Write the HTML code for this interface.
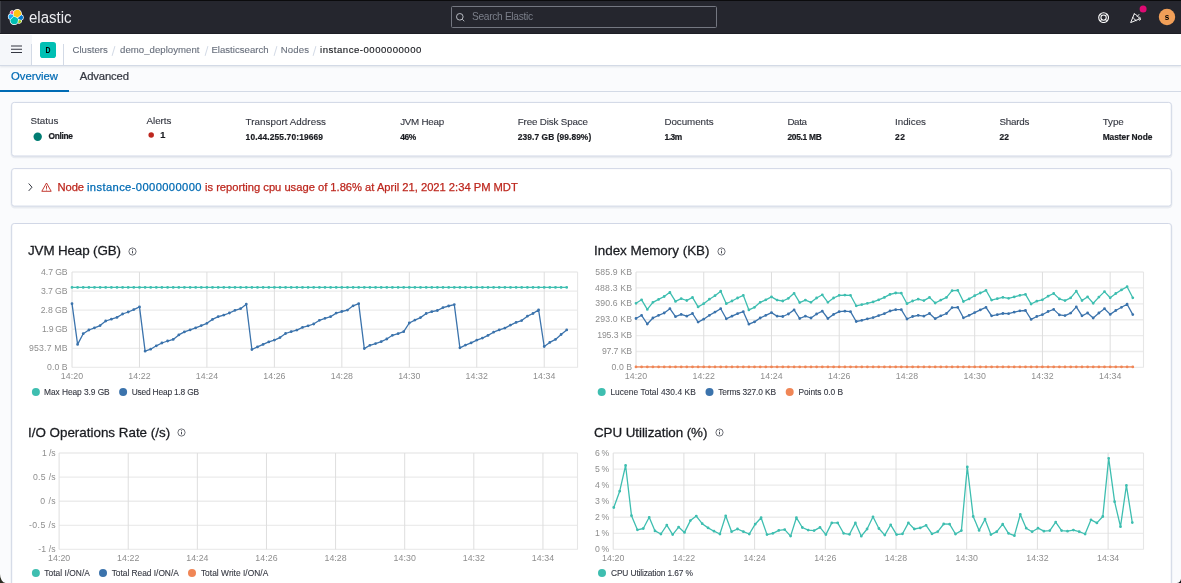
<!DOCTYPE html>
<html lang="en"><head><meta charset="utf-8"><title>Stack Monitoring - Node instance-0000000000</title>
<style>
html,body{margin:0;padding:0}
body{width:1181px;height:583px;overflow:hidden;background:#fafbfd;position:relative;font-family:"Liberation Sans",sans-serif}
#root{position:absolute;left:0;top:0;width:1181px;height:583px;will-change:transform}
.abs{position:absolute}
.t{position:absolute;white-space:nowrap;line-height:1}
.hdr{position:absolute;left:0;top:0;width:1181px;height:34px;background:#25262e}
.search{position:absolute;left:450.7px;top:5.6px;width:264.5px;height:20.4px;border:1px solid #747781;border-radius:1.5px;background:#25262e;box-sizing:content-box}
.bar2{position:absolute;left:0;top:34px;width:1181px;height:31px;background:#fff;border-bottom:1px solid #d3dae6;box-shadow:0 1px 2px rgba(152,162,179,.25)}
.menu{position:absolute;left:0;top:35px;width:32px;height:30px;background:#f5f7fa}
</style></head>
<body>
<div id="root">
<div class="hdr"></div>
<svg class="abs" style="left:7px;top:8px" width="17" height="17" viewBox="-1.6 -2.1 34 34"><g fill="#fff" stroke="#fff" stroke-width="2.7" stroke-linejoin="round"><path d="M12.58 13.787l7.002 3.211 7.066-6.213a7.849 7.849 0 00.152-1.557c0-4.287-3.49-7.775-7.776-7.775a7.761 7.761 0 00-6.413 3.388l-1.176 6.118 1.145 2.828z"/><path d="M5.333 21.215a7.913 7.913 0 00-.151 1.58c0 4.299 3.497 7.796 7.796 7.796a7.783 7.783 0 006.437-3.408l1.166-6.096-1.556-2.983-7.03-3.215-6.662 6.326z"/><path d="M5.29 9.075l4.799 1.136 1.052-5.472a3.787 3.787 0 00-2.27-.757 3.797 3.797 0 00-3.58 5.093z"/><path d="M4.872 10.22a5.354 5.354 0 00-3.53 5.026 5.33 5.33 0 003.447 4.989l6.735-6.103-1.237-2.651-5.415-1.26z"/><path d="M20.873 27.183a3.764 3.764 0 002.263.77 3.797 3.797 0 003.58-5.093l-4.797-1.136-1.046 5.459z"/><path d="M21.848 20.563l5.284 1.24a5.39 5.39 0 003.53-5.027 5.33 5.33 0 00-3.456-4.984l-6.91 6.069 1.552 2.702z"/></g><path fill="#FEC514" d="M12.58 13.787l7.002 3.211 7.066-6.213a7.849 7.849 0 00.152-1.557c0-4.287-3.49-7.775-7.776-7.775a7.761 7.761 0 00-6.413 3.388l-1.176 6.118 1.145 2.828z"/><path fill="#00BFB3" d="M5.333 21.215a7.913 7.913 0 00-.151 1.58c0 4.299 3.497 7.796 7.796 7.796a7.783 7.783 0 006.437-3.408l1.166-6.096-1.556-2.983-7.03-3.215-6.662 6.326z"/><path fill="#F04E98" d="M5.29 9.075l4.799 1.136 1.052-5.472a3.787 3.787 0 00-2.27-.757 3.797 3.797 0 00-3.58 5.093z"/><path fill="#1BA9F5" d="M4.872 10.22a5.354 5.354 0 00-3.53 5.026 5.33 5.33 0 003.447 4.989l6.735-6.103-1.237-2.651-5.415-1.26z"/><path fill="#93C90E" d="M20.873 27.183a3.764 3.764 0 002.263.77 3.797 3.797 0 003.58-5.093l-4.797-1.136-1.046 5.459z"/><path fill="#0077CC" d="M21.848 20.563l5.284 1.24a5.39 5.39 0 003.53-5.027 5.33 5.33 0 00-3.456-4.984l-6.91 6.069 1.552 2.702z"/></svg>
<span class="t" id="elastic" style="left:29.1px;top:9px;font-size:16.3px;color:#ececf0;transform:scaleX(0.9230);transform-origin:0 0;">elastic</span>
<div class="search"></div>
<svg class="abs" style="left:455px;top:12px" width="10" height="10" viewBox="0 0 10 10"><path fill="none" stroke="#bfc2c9" stroke-width=".95" d="M7.3 7.3 9.3 9.2"/><circle cx="4.8" cy="4.8" r="3.3" fill="none" stroke="#bfc2c9" stroke-width=".95"/></svg>
<span class="t" id="search" style="left:472px;top:12px;font-size:10.2px;color:#7b7f8a;letter-spacing:-0.317px;">Search Elastic</span>
<svg class="abs" style="left:1097.9px;top:11.7px" width="11.2" height="11.2" viewBox="0 0 16 16" fill="none" stroke="#fff" stroke-width="1.1">
<circle cx="8" cy="8" r="7" stroke-width="1.6"/><circle cx="8" cy="8" r="3.8" stroke-width="1.5"/><path d="M3 3 5.2 5.2M13 3 10.8 5.2M3 13 5.2 10.8M13 13 10.8 10.8" stroke-width="1.5" stroke-opacity=".75"/></svg>
<svg class="abs" style="left:1129.6px;top:11.5px" width="11.4" height="11.4" viewBox="0 0 16 16" fill="none" stroke="#fff" stroke-width="1.35" stroke-linejoin="round" stroke-linecap="round">
<path d="M6 2.6 0.9 14.9 13.2 9.8M6 2.6c3.2 1.1 6 3.9 7.2 7.2M3.8 7.8c2 1.1 3.5 2.7 4.5 4.6M10.2 6.200l2.3-2.6M13.4 7.3c1.100.3 1.9 1.1 1.6 2.5-.2.9-.700 1.5-1.3 1.9"/></svg>
<svg class="abs" style="left:1138px;top:4px" width="10" height="10"><circle cx="5.1" cy="5.00" r="3.5" fill="#dd0a73"/></svg>
<svg class="abs" style="left:1157px;top:7px" width="20" height="20"><circle cx="10.00" cy="10.00" r="8.2" fill="#f19f58"/></svg>
<span class="t" id="avs" style="left:1067px;width:200px;text-align:center;top:13px;font-size:8.8px;color:#000;font-weight:700;transform:scaleX(0.8968);transform-origin:50% 0;">s</span>
<div class="bar2"></div>
<div class="menu"></div>
<svg class="abs" style="left:11px;top:44px" width="11" height="10" viewBox="0 0 11 10"><path stroke="#343741" stroke-width="1.1" d="M0 2h11M0 5.3h11M0 8.55h11"/></svg>
<div class="abs" style="left:40px;top:42px;width:16px;height:16px;border-radius:2.8px;background:#00bfb3"></div>
<span class="t" id="D" style="left:-52.2px;width:200px;text-align:center;top:46px;font-size:8.4px;color:#000;font-weight:700;transform:scaleX(0.8247);transform-origin:50% 0;">D</span>
<div class="abs" style="left:31px;top:44px;width:1px;height:21px;background:#d3dae6"></div>
<div class="abs" style="left:63px;top:44px;width:1px;height:21px;background:#d3dae6"></div>
<span class="t" id="bc1" style="left:72.5px;top:45px;font-size:9.6px;color:#69707d;letter-spacing:0.016px;-webkit-text-stroke:0.12px;">Clusters</span>
<span class="t" id="bc2" style="left:120px;top:45px;font-size:9.6px;color:#69707d;letter-spacing:0.04px;-webkit-text-stroke:0.12px;">demo_deployment</span>
<span class="t" id="bc3" style="left:211.4px;top:45px;font-size:9.6px;color:#69707d;letter-spacing:0.011px;-webkit-text-stroke:0.12px;">Elasticsearch</span>
<span class="t" id="bc4" style="left:280.8px;top:45px;font-size:9.6px;color:#69707d;letter-spacing:0.116px;-webkit-text-stroke:0.12px;">Nodes</span>
<span class="t" id="bc5" style="left:320px;top:45px;font-size:9.6px;color:#1a1c21;letter-spacing:0.506px;-webkit-text-stroke:0.15px;">instance-0000000000</span>
<div class="abs" style="left:112.9px;top:45.8px;width:1px;height:10px;background:#d3dae6;transform:rotate(17deg)"></div>
<div class="abs" style="left:205.8px;top:45.8px;width:1px;height:10px;background:#d3dae6;transform:rotate(17deg)"></div>
<div class="abs" style="left:274.5px;top:45.8px;width:1px;height:10px;background:#d3dae6;transform:rotate(17deg)"></div>
<div class="abs" style="left:314.3px;top:45.8px;width:1px;height:10px;background:#d3dae6;transform:rotate(17deg)"></div>
<div class="abs" style="left:0;top:91px;width:1181px;height:1px;background:#d3dae6"></div>
<div class="abs" style="left:0;top:90px;width:69px;height:2px;background:#006bb4"></div>
<span class="t" id="tab1" style="left:11.1px;top:71px;font-size:11.3px;color:#006bb4;letter-spacing:-0.028px;-webkit-text-stroke:0.22px;">Overview</span>
<span class="t" id="tab2" style="left:79.8px;top:71px;font-size:11.3px;color:#343741;letter-spacing:-0.15px;-webkit-text-stroke:0.22px;">Advanced</span>
<svg class="abs" style="left:0;top:0" width="1181" height="583" viewBox="0 0 1181 583"><rect x="11.7" y="103.6" width="1159.6" height="53.6" rx="3" fill="none" stroke="#98a2b3" stroke-opacity=".16" stroke-width="2.2"/><rect x="11.7" y="102.4" width="1159.6" height="53.6" rx="2.5" fill="#fff" stroke="#d1d7e6" stroke-width="1"/><rect x="11.7" y="169.8" width="1159.6" height="37.5" rx="3" fill="none" stroke="#98a2b3" stroke-opacity=".16" stroke-width="2.2"/><rect x="11.7" y="168.6" width="1159.6" height="37.5" rx="2.5" fill="#fff" stroke="#d1d7e6" stroke-width="1"/><rect x="11.7" y="224.7" width="1159.6" height="396.5" rx="3" fill="none" stroke="#98a2b3" stroke-opacity=".16" stroke-width="2.2"/><rect x="11.7" y="223.5" width="1159.6" height="396.5" rx="2.5" fill="#fff" stroke="#d1d7e6" stroke-width="1"/></svg>
<span class="t" id="lab0" style="left:30.5px;top:116px;font-size:9.8px;color:#343741;letter-spacing:0.004px;-webkit-text-stroke:0.12px;">Status</span>
<span class="t" id="lab1" style="left:146.5px;top:116px;font-size:9.8px;color:#343741;letter-spacing:-0.029px;-webkit-text-stroke:0.12px;">Alerts</span>
<span class="t" id="lab2" style="left:245.6px;top:117px;font-size:9.8px;color:#343741;letter-spacing:0.044px;-webkit-text-stroke:0.12px;">Transport Address</span>
<span class="t" id="lab3" style="left:400.2px;top:117px;font-size:9.8px;color:#343741;letter-spacing:-0.264px;-webkit-text-stroke:0.12px;">JVM Heap</span>
<span class="t" id="lab4" style="left:517.8px;top:117px;font-size:9.8px;color:#343741;letter-spacing:-0.166px;-webkit-text-stroke:0.12px;">Free Disk Space</span>
<span class="t" id="lab5" style="left:664.4px;top:117px;font-size:9.8px;color:#343741;letter-spacing:-0.045px;-webkit-text-stroke:0.12px;">Documents</span>
<span class="t" id="lab6" style="left:787.4px;top:117px;font-size:9.8px;color:#343741;letter-spacing:-0.368px;-webkit-text-stroke:0.12px;">Data</span>
<span class="t" id="lab7" style="left:895px;top:117px;font-size:9.8px;color:#343741;letter-spacing:-0.008px;-webkit-text-stroke:0.12px;">Indices</span>
<span class="t" id="lab8" style="left:999.4px;top:117px;font-size:9.8px;color:#343741;letter-spacing:-0.209px;-webkit-text-stroke:0.12px;">Shards</span>
<span class="t" id="lab9" style="left:1102.7px;top:117px;font-size:9.8px;color:#343741;letter-spacing:-0.05px;-webkit-text-stroke:0.12px;">Type</span>
<span class="t" id="val0" style="left:48.5px;top:132px;font-size:8.4px;color:#1a1c21;font-weight:700;letter-spacing:-0.312px;-webkit-text-stroke:0.2px;">Online</span>
<span class="t" id="val1" style="left:160.2px;top:131px;font-size:9.2px;color:#1a1c21;font-weight:700;-webkit-text-stroke:0.2px;">1</span>
<span class="t" id="val2" style="left:245.6px;top:133px;font-size:8.4px;color:#1a1c21;font-weight:700;letter-spacing:0.142px;-webkit-text-stroke:0.2px;">10.44.255.70:19669</span>
<span class="t" id="val3" style="left:400.2px;top:133px;font-size:8.4px;color:#1a1c21;font-weight:700;letter-spacing:-0.383px;-webkit-text-stroke:0.2px;">46%</span>
<span class="t" id="val4" style="left:517.8px;top:133px;font-size:8.4px;color:#1a1c21;font-weight:700;letter-spacing:0.077px;-webkit-text-stroke:0.2px;">239.7 GB (99.89%)</span>
<span class="t" id="val5" style="left:664.4px;top:133px;font-size:8.4px;color:#1a1c21;font-weight:700;letter-spacing:-0.4px;-webkit-text-stroke:0.2px;">1.3m</span>
<span class="t" id="val6" style="left:787.4px;top:133px;font-size:8.4px;color:#1a1c21;font-weight:700;letter-spacing:-0.273px;-webkit-text-stroke:0.2px;">205.1 MB</span>
<span class="t" id="val7" style="left:895px;top:133px;font-size:8.4px;color:#1a1c21;font-weight:700;letter-spacing:0.672px;-webkit-text-stroke:0.2px;">22</span>
<span class="t" id="val8" style="left:999.4px;top:133px;font-size:8.4px;color:#1a1c21;font-weight:700;letter-spacing:0.272px;-webkit-text-stroke:0.2px;">22</span>
<span class="t" id="val9" style="left:1102.7px;top:133px;font-size:8.4px;color:#1a1c21;font-weight:700;letter-spacing:-0.057px;-webkit-text-stroke:0.2px;">Master Node</span>
<svg class="abs" style="left:32px;top:131px" width="12" height="12"><circle cx="5.7" cy="5.7" r="4.2" fill="#017d73"/></svg>
<svg class="abs" style="left:147px;top:131px" width="9" height="9"><circle cx="4.2" cy="4.1" r="2.75" fill="#bd271e"/></svg>
<svg class="abs" style="left:26px;top:182px" width="10" height="10" viewBox="0 0 10 10"><path fill="none" stroke="#343741" stroke-width="1" d="M2.7 1.5 6 5.2 2.7 8.9"/></svg>
<svg class="abs" style="left:41px;top:182px" width="11" height="10" viewBox="0 0 11 10"><path fill="none" stroke="#bd271e" stroke-width=".9" stroke-linejoin="round" d="M5.5 1 10.2 9.3H.8zM5.5 3.8v3M5.5 7.6v.8"/></svg>
<span class="t" id="al1" style="left:57.5px;top:182px;font-size:11.2px;color:#bd271e;letter-spacing:-0.083px;-webkit-text-stroke:0.25px;">Node</span>
<span class="t" id="al2" style="left:87px;top:182px;font-size:11.2px;color:#006bb4;letter-spacing:0.382px;-webkit-text-stroke:0.25px;">instance-0000000000</span>
<span class="t" id="al3" style="left:205px;top:182px;font-size:11.2px;color:#bd271e;letter-spacing:-0.011px;-webkit-text-stroke:0.25px;">is reporting cpu usage of 1.86% at April 21, 2021 2:34 PM MDT</span>
<span class="t" id="c1t" style="left:28px;top:244px;font-size:13.4px;color:#1a1c21;letter-spacing:-0.125px;-webkit-text-stroke:0.27px;">JVM Heap (GB)</span>
<svg class="abs" style="left:127.8px;top:246.8px" width="9" height="9" viewBox="0 0 9 9"><circle cx="4.5" cy="4.5" r="3.6" fill="none" stroke="#343741" stroke-width=".7"/><path stroke="#343741" stroke-width=".9" d="M4.5 3.9v2.5M4.5 2.3v.9"/></svg>
<svg class="abs" style="left:0;top:0" width="1181" height="583" viewBox="0 0 1181 583"><path d="M72 272.00H577.6M72 291.08H577.6M72 310.16H577.6M72 329.24H577.6M72 348.32H577.6M72 367.4H577.6" stroke="#ececec" stroke-width="1.35" fill="none"/><path d="M72.00 272V367.4M139.46 272V367.4M206.92 272V367.4M274.38 272V367.4M341.84 272V367.4M409.3 272V367.4M476.76 272V367.4M544.22 272V367.4" stroke="#dedede" stroke-width="1" fill="none"/><path d="M577.6 272V367.4" stroke="#e6e6e6" stroke-width="1.1" fill="none"/><path d="M72.0 287.4L77.6 287.4L83.2 287.4L88.9 287.4L94.5 287.4L100.1 287.4L105.7 287.4L111.4 287.4L117.0 287.4L122.6 287.4L128.2 287.4L133.8 287.4L139.5 287.4L145.1 287.4L150.7 287.4L156.3 287.4L161.9 287.4L167.6 287.4L173.2 287.4L178.8 287.4L184.4 287.4L190.1 287.4L195.7 287.4L201.3 287.4L206.9 287.4L212.5 287.4L218.2 287.4L223.8 287.4L229.4 287.4L235.0 287.4L240.6 287.4L246.3 287.4L251.9 287.4L257.5 287.4L263.1 287.4L268.8 287.4L274.4 287.4L280.0 287.4L285.6 287.4L291.2 287.4L296.9 287.4L302.5 287.4L308.1 287.4L313.7 287.4L319.4 287.4L325.0 287.4L330.6 287.4L336.2 287.4L341.8 287.4L347.5 287.4L353.1 287.4L358.7 287.4L364.3 287.4L369.9 287.4L375.6 287.4L381.2 287.4L386.8 287.4L392.4 287.4L398.1 287.4L403.7 287.4L409.3 287.4L414.9 287.4L420.5 287.4L426.2 287.4L431.8 287.4L437.4 287.4L443.0 287.4L448.7 287.4L454.3 287.4L459.9 287.4L465.5 287.4L471.1 287.4L476.8 287.4L482.4 287.4L488.0 287.4L493.6 287.4L499.2 287.4L504.9 287.4L510.5 287.4L516.1 287.4L521.7 287.4L527.4 287.4L533.0 287.4L538.6 287.4L544.2 287.4L549.8 287.4L555.5 287.4L561.1 287.4L566.7 287.4" stroke="#3ebeb0" stroke-width="1.3" fill="none" stroke-linejoin="round"/><path d="M72.0 287.4h0M77.6 287.4h0M83.2 287.4h0M88.9 287.4h0M94.5 287.4h0M100.1 287.4h0M105.7 287.4h0M111.4 287.4h0M117.0 287.4h0M122.6 287.4h0M128.2 287.4h0M133.8 287.4h0M139.5 287.4h0M145.1 287.4h0M150.7 287.4h0M156.3 287.4h0M161.9 287.4h0M167.6 287.4h0M173.2 287.4h0M178.8 287.4h0M184.4 287.4h0M190.1 287.4h0M195.7 287.4h0M201.3 287.4h0M206.9 287.4h0M212.5 287.4h0M218.2 287.4h0M223.8 287.4h0M229.4 287.4h0M235.0 287.4h0M240.6 287.4h0M246.3 287.4h0M251.9 287.4h0M257.5 287.4h0M263.1 287.4h0M268.8 287.4h0M274.4 287.4h0M280.0 287.4h0M285.6 287.4h0M291.2 287.4h0M296.9 287.4h0M302.5 287.4h0M308.1 287.4h0M313.7 287.4h0M319.4 287.4h0M325.0 287.4h0M330.6 287.4h0M336.2 287.4h0M341.8 287.4h0M347.5 287.4h0M353.1 287.4h0M358.7 287.4h0M364.3 287.4h0M369.9 287.4h0M375.6 287.4h0M381.2 287.4h0M386.8 287.4h0M392.4 287.4h0M398.1 287.4h0M403.7 287.4h0M409.3 287.4h0M414.9 287.4h0M420.5 287.4h0M426.2 287.4h0M431.8 287.4h0M437.4 287.4h0M443.0 287.4h0M448.7 287.4h0M454.3 287.4h0M459.9 287.4h0M465.5 287.4h0M471.1 287.4h0M476.8 287.4h0M482.4 287.4h0M488.0 287.4h0M493.6 287.4h0M499.2 287.4h0M504.9 287.4h0M510.5 287.4h0M516.1 287.4h0M521.7 287.4h0M527.4 287.4h0M533.0 287.4h0M538.6 287.4h0M544.2 287.4h0M549.8 287.4h0M555.5 287.4h0M561.1 287.4h0M566.7 287.4h0" stroke="#3ebeb0" stroke-width="2.8" stroke-linecap="round" fill="none"/><path d="M72.0 303.7L77.6 344.4L83.2 333.7L88.9 330.0L94.5 327.8L100.1 325.6L105.7 321.0L111.4 319.2L117.0 317.4L122.6 314.0L128.2 312.0L133.8 309.6L139.5 306.9L145.1 351.2L150.7 349.2L156.3 345.8L161.9 343.0L167.6 341.0L173.2 339.4L178.8 334.9L184.4 331.9L190.1 329.9L195.7 327.8L201.3 325.6L206.9 323.3L212.5 319.4L218.2 316.7L223.8 315.1L229.4 313.0L235.0 310.3L240.6 308.7L246.3 304.2L251.9 349.5L257.5 346.9L263.1 344.4L268.8 341.9L274.4 340.1L280.0 337.6L285.6 333.5L291.2 331.7L296.9 330.1L302.5 327.4L308.1 325.8L313.7 324.0L319.4 320.3L325.0 318.3L330.6 316.7L336.2 313.1L341.8 311.5L347.5 310.1L353.1 305.8L358.7 303.7L364.3 348.6L369.9 345.3L375.6 343.6L381.2 341.7L386.8 339.0L392.4 335.3L398.1 333.7L403.7 331.7L409.3 323.0L414.9 320.1L420.5 317.6L426.2 313.5L431.8 311.7L437.4 310.5L443.0 307.6L448.7 306.0L454.3 304.6L459.9 347.8L465.5 345.1L471.1 342.9L476.8 340.1L482.4 338.1L488.0 335.4L493.6 332.2L499.2 329.9L504.9 328.1L510.5 325.1L516.1 322.4L521.7 320.6L527.4 316.2L533.0 313.5L538.6 309.9L544.2 346.5L549.8 342.4L555.5 339.4L561.1 334.5L566.7 329.9" stroke="#3b73ac" stroke-width="1.3" fill="none" stroke-linejoin="round"/><path d="M72.0 303.7h0M77.6 344.4h0M83.2 333.7h0M88.9 330.0h0M94.5 327.8h0M100.1 325.6h0M105.7 321.0h0M111.4 319.2h0M117.0 317.4h0M122.6 314.0h0M128.2 312.0h0M133.8 309.6h0M139.5 306.9h0M145.1 351.2h0M150.7 349.2h0M156.3 345.8h0M161.9 343.0h0M167.6 341.0h0M173.2 339.4h0M178.8 334.9h0M184.4 331.9h0M190.1 329.9h0M195.7 327.8h0M201.3 325.6h0M206.9 323.3h0M212.5 319.4h0M218.2 316.7h0M223.8 315.1h0M229.4 313.0h0M235.0 310.3h0M240.6 308.7h0M246.3 304.2h0M251.9 349.5h0M257.5 346.9h0M263.1 344.4h0M268.8 341.9h0M274.4 340.1h0M280.0 337.6h0M285.6 333.5h0M291.2 331.7h0M296.9 330.1h0M302.5 327.4h0M308.1 325.8h0M313.7 324.0h0M319.4 320.3h0M325.0 318.3h0M330.6 316.7h0M336.2 313.1h0M341.8 311.5h0M347.5 310.1h0M353.1 305.8h0M358.7 303.7h0M364.3 348.6h0M369.9 345.3h0M375.6 343.6h0M381.2 341.7h0M386.8 339.0h0M392.4 335.3h0M398.1 333.7h0M403.7 331.7h0M409.3 323.0h0M414.9 320.1h0M420.5 317.6h0M426.2 313.5h0M431.8 311.7h0M437.4 310.5h0M443.0 307.6h0M448.7 306.0h0M454.3 304.6h0M459.9 347.8h0M465.5 345.1h0M471.1 342.9h0M476.8 340.1h0M482.4 338.1h0M488.0 335.4h0M493.6 332.2h0M499.2 329.9h0M504.9 328.1h0M510.5 325.1h0M516.1 322.4h0M521.7 320.6h0M527.4 316.2h0M533.0 313.5h0M538.6 309.9h0M544.2 346.5h0M549.8 342.4h0M555.5 339.4h0M561.1 334.5h0M566.7 329.9h0" stroke="#3b73ac" stroke-width="2.8" stroke-linecap="round" fill="none"/></svg>
<span class="t" id="c1y0" style="right:1113.51px;top:268px;font-size:8.7px;color:#8e8e8e;letter-spacing:-0.109px;">4.7 GB</span>
<span class="t" id="c1y1" style="right:1113.47px;top:287px;font-size:8.7px;color:#8e8e8e;letter-spacing:-0.069px;">3.7 GB</span>
<span class="t" id="c1y2" style="right:1113.43px;top:306px;font-size:8.7px;color:#8e8e8e;letter-spacing:-0.029px;">2.8 GB</span>
<span class="t" id="c1y3" style="right:1113.71px;top:325px;font-size:8.7px;color:#8e8e8e;letter-spacing:-0.309px;">1.9 GB</span>
<span class="t" id="c1y4" style="right:1113.2px;top:344px;font-size:8.7px;color:#8e8e8e;letter-spacing:0.202px;">953.7 MB</span>
<span class="t" id="c1y5" style="right:1113.32px;top:363px;font-size:8.7px;color:#8e8e8e;letter-spacing:0.076px;">0.0 B</span>
<span class="t" id="c1x0" style="left:-27.96px;width:200px;text-align:center;top:372px;font-size:8.8px;color:#8e8e8e;letter-spacing:0.071px;">14:20</span>
<span class="t" id="c1x1" style="left:39.5px;width:200px;text-align:center;top:372px;font-size:8.8px;color:#8e8e8e;letter-spacing:0.071px;">14:22</span>
<span class="t" id="c1x2" style="left:106.96px;width:200px;text-align:center;top:372px;font-size:8.8px;color:#8e8e8e;letter-spacing:0.071px;">14:24</span>
<span class="t" id="c1x3" style="left:174.42px;width:200px;text-align:center;top:372px;font-size:8.8px;color:#8e8e8e;letter-spacing:0.071px;">14:26</span>
<span class="t" id="c1x4" style="left:241.88px;width:200px;text-align:center;top:372px;font-size:8.8px;color:#8e8e8e;letter-spacing:0.071px;">14:28</span>
<span class="t" id="c1x5" style="left:309.34px;width:200px;text-align:center;top:372px;font-size:8.8px;color:#8e8e8e;letter-spacing:0.071px;">14:30</span>
<span class="t" id="c1x6" style="left:376.8px;width:200px;text-align:center;top:372px;font-size:8.8px;color:#8e8e8e;letter-spacing:0.071px;">14:32</span>
<span class="t" id="c1x7" style="left:444.26px;width:200px;text-align:center;top:372px;font-size:8.8px;color:#8e8e8e;letter-spacing:0.071px;">14:34</span>
<svg class="abs" style="left:30px;top:386px" width="11" height="11"><circle cx="5.9" cy="5.9" r="4" fill="#3ebeb0"/></svg>
<span class="t" id="c1l0" style="left:44px;top:388px;font-size:8.4px;color:#343741;letter-spacing:-0.063px;-webkit-text-stroke:0.1px;">Max Heap 3.9 GB</span>
<svg class="abs" style="left:118px;top:386px" width="11" height="11"><circle cx="5.1" cy="5.9" r="4" fill="#3b73ac"/></svg>
<span class="t" id="c1l1" style="left:131.7px;top:388px;font-size:8.4px;color:#343741;letter-spacing:-0.193px;-webkit-text-stroke:0.1px;">Used Heap 1.8 GB</span>
<span class="t" id="c2t" style="left:594px;top:244px;font-size:13.4px;color:#1a1c21;letter-spacing:0.01px;-webkit-text-stroke:0.27px;">Index Memory (KB)</span>
<svg class="abs" style="left:717px;top:246.8px" width="9" height="9" viewBox="0 0 9 9"><circle cx="4.5" cy="4.5" r="3.6" fill="none" stroke="#343741" stroke-width=".7"/><path stroke="#343741" stroke-width=".9" d="M4.5 3.9v2.5M4.5 2.3v.9"/></svg>
<svg class="abs" style="left:0;top:0" width="1181" height="583" viewBox="0 0 1181 583"><path d="M636 272.00H1143.5M636 287.9H1143.5M636 303.8H1143.5M636 319.7H1143.5M636 335.6H1143.5M636 351.5H1143.5M636 367.4H1143.5" stroke="#ececec" stroke-width="1.35" fill="none"/><path d="M636.00 272V367.4M703.74 272V367.4M771.48 272V367.4M839.22 272V367.4M906.96 272V367.4M974.7 272V367.4M1042.44 272V367.4M1110.18 272V367.4" stroke="#dedede" stroke-width="1" fill="none"/><path d="M1143.5 272V367.4" stroke="#e6e6e6" stroke-width="1.1" fill="none"/><path d="M636.0 303.3L641.6 299.8L647.3 309.4L652.9 302.3L658.6 299.4L664.2 296.5L669.9 292.3L675.5 301.4L681.2 298.7L686.8 300.5L692.5 297.4L698.1 306.9L703.7 303.7L709.4 299.2L715.0 295.7L720.7 291.2L726.3 303.7L732.0 301.0L737.6 298.0L743.3 295.3L748.9 309.9L754.5 307.3L760.2 302.3L765.8 299.8L771.5 296.9L777.1 300.1L782.8 301.0L788.4 298.3L794.1 293.3L799.7 302.6L805.4 300.1L811.0 302.3L816.6 298.0L822.3 294.8L827.9 302.3L833.6 298.0L839.2 295.3L844.9 295.1L850.5 295.3L856.2 305.8L861.8 304.6L867.4 303.3L873.1 301.9L878.7 299.8L884.4 297.4L890.0 294.4L895.7 293.0L901.3 293.2L907.0 303.7L912.6 301.0L918.2 299.2L923.9 300.6L929.5 297.4L935.2 303.0L940.8 300.1L946.5 297.4L952.1 290.7L957.8 290.3L963.4 301.5L969.1 298.9L974.7 295.7L980.3 293.0L986.0 290.3L991.6 300.1L997.3 298.7L1002.9 297.3L1008.6 298.3L1014.2 296.9L1019.9 295.3L1025.5 294.4L1031.1 304.0L1036.8 301.2L1042.4 299.8L1048.1 296.2L1053.7 293.5L1059.4 298.9L1065.0 300.6L1070.7 297.8L1076.3 291.2L1082.0 300.5L1087.6 296.9L1093.2 303.3L1098.9 297.1L1104.5 291.6L1110.2 297.8L1115.8 293.5L1121.5 289.9L1127.1 286.7L1132.8 297.8" stroke="#3ebeb0" stroke-width="1.3" fill="none" stroke-linejoin="round"/><path d="M636.0 303.3h0M641.6 299.8h0M647.3 309.4h0M652.9 302.3h0M658.6 299.4h0M664.2 296.5h0M669.9 292.3h0M675.5 301.4h0M681.2 298.7h0M686.8 300.5h0M692.5 297.4h0M698.1 306.9h0M703.7 303.7h0M709.4 299.2h0M715.0 295.7h0M720.7 291.2h0M726.3 303.7h0M732.0 301.0h0M737.6 298.0h0M743.3 295.3h0M748.9 309.9h0M754.5 307.3h0M760.2 302.3h0M765.8 299.8h0M771.5 296.9h0M777.1 300.1h0M782.8 301.0h0M788.4 298.3h0M794.1 293.3h0M799.7 302.6h0M805.4 300.1h0M811.0 302.3h0M816.6 298.0h0M822.3 294.8h0M827.9 302.3h0M833.6 298.0h0M839.2 295.3h0M844.9 295.1h0M850.5 295.3h0M856.2 305.8h0M861.8 304.6h0M867.4 303.3h0M873.1 301.9h0M878.7 299.8h0M884.4 297.4h0M890.0 294.4h0M895.7 293.0h0M901.3 293.2h0M907.0 303.7h0M912.6 301.0h0M918.2 299.2h0M923.9 300.6h0M929.5 297.4h0M935.2 303.0h0M940.8 300.1h0M946.5 297.4h0M952.1 290.7h0M957.8 290.3h0M963.4 301.5h0M969.1 298.9h0M974.7 295.7h0M980.3 293.0h0M986.0 290.3h0M991.6 300.1h0M997.3 298.7h0M1002.9 297.3h0M1008.6 298.3h0M1014.2 296.9h0M1019.9 295.3h0M1025.5 294.4h0M1031.1 304.0h0M1036.8 301.2h0M1042.4 299.8h0M1048.1 296.2h0M1053.7 293.5h0M1059.4 298.9h0M1065.0 300.6h0M1070.7 297.8h0M1076.3 291.2h0M1082.0 300.5h0M1087.6 296.9h0M1093.2 303.3h0M1098.9 297.1h0M1104.5 291.6h0M1110.2 297.8h0M1115.8 293.5h0M1121.5 289.9h0M1127.1 286.7h0M1132.8 297.8h0" stroke="#3ebeb0" stroke-width="2.8" stroke-linecap="round" fill="none"/><path d="M636.0 318.5L641.6 315.3L647.3 324.0L652.9 318.0L658.6 315.3L664.2 313.0L669.9 308.7L675.5 316.7L681.2 314.4L686.8 316.2L692.5 313.5L698.1 322.1L703.7 319.2L709.4 315.3L715.0 312.1L720.7 308.7L726.3 318.8L732.0 316.2L737.6 313.7L743.3 311.7L748.9 324.2L754.5 321.9L760.2 318.0L765.8 315.3L771.5 312.6L777.1 316.2L782.8 316.5L788.4 314.0L794.1 309.9L799.7 318.5L805.4 316.2L811.0 318.0L816.6 314.0L822.3 311.2L827.9 318.5L833.6 314.4L839.2 311.7L844.9 311.2L850.5 311.7L856.2 321.5L861.8 320.3L867.4 318.8L873.1 317.6L878.7 315.6L884.4 313.7L890.0 311.0L895.7 309.7L901.3 309.7L907.0 319.0L912.6 316.5L918.2 315.3L923.9 316.2L929.5 313.5L935.2 318.7L940.8 315.8L946.5 313.5L952.1 307.6L957.8 307.3L963.4 317.8L969.1 315.3L974.7 312.6L980.3 309.9L986.0 307.3L991.6 315.8L997.3 314.7L1002.9 313.5L1008.6 313.7L1014.2 312.2L1019.9 310.8L1025.5 310.5L1031.1 319.4L1036.8 316.5L1042.4 314.7L1048.1 311.5L1053.7 309.4L1059.4 314.9L1065.0 315.6L1070.7 313.1L1076.3 306.9L1082.0 315.8L1087.6 313.0L1093.2 318.0L1098.9 313.0L1104.5 308.7L1110.2 314.4L1115.8 310.5L1121.5 307.3L1127.1 304.2L1132.8 314.6" stroke="#3b73ac" stroke-width="1.3" fill="none" stroke-linejoin="round"/><path d="M636.0 318.5h0M641.6 315.3h0M647.3 324.0h0M652.9 318.0h0M658.6 315.3h0M664.2 313.0h0M669.9 308.7h0M675.5 316.7h0M681.2 314.4h0M686.8 316.2h0M692.5 313.5h0M698.1 322.1h0M703.7 319.2h0M709.4 315.3h0M715.0 312.1h0M720.7 308.7h0M726.3 318.8h0M732.0 316.2h0M737.6 313.7h0M743.3 311.7h0M748.9 324.2h0M754.5 321.9h0M760.2 318.0h0M765.8 315.3h0M771.5 312.6h0M777.1 316.2h0M782.8 316.5h0M788.4 314.0h0M794.1 309.9h0M799.7 318.5h0M805.4 316.2h0M811.0 318.0h0M816.6 314.0h0M822.3 311.2h0M827.9 318.5h0M833.6 314.4h0M839.2 311.7h0M844.9 311.2h0M850.5 311.7h0M856.2 321.5h0M861.8 320.3h0M867.4 318.8h0M873.1 317.6h0M878.7 315.6h0M884.4 313.7h0M890.0 311.0h0M895.7 309.7h0M901.3 309.7h0M907.0 319.0h0M912.6 316.5h0M918.2 315.3h0M923.9 316.2h0M929.5 313.5h0M935.2 318.7h0M940.8 315.8h0M946.5 313.5h0M952.1 307.6h0M957.8 307.3h0M963.4 317.8h0M969.1 315.3h0M974.7 312.6h0M980.3 309.9h0M986.0 307.3h0M991.6 315.8h0M997.3 314.7h0M1002.9 313.5h0M1008.6 313.7h0M1014.2 312.2h0M1019.9 310.8h0M1025.5 310.5h0M1031.1 319.4h0M1036.8 316.5h0M1042.4 314.7h0M1048.1 311.5h0M1053.7 309.4h0M1059.4 314.9h0M1065.0 315.6h0M1070.7 313.1h0M1076.3 306.9h0M1082.0 315.8h0M1087.6 313.0h0M1093.2 318.0h0M1098.9 313.0h0M1104.5 308.7h0M1110.2 314.4h0M1115.8 310.5h0M1121.5 307.3h0M1127.1 304.2h0M1132.8 314.6h0" stroke="#3b73ac" stroke-width="2.8" stroke-linecap="round" fill="none"/><path d="M636.0 366.9L641.6 366.9L647.3 366.9L652.9 366.9L658.6 366.9L664.2 366.9L669.9 366.9L675.5 366.9L681.2 366.9L686.8 366.9L692.5 366.9L698.1 366.9L703.7 366.9L709.4 366.9L715.0 366.9L720.7 366.9L726.3 366.9L732.0 366.9L737.6 366.9L743.3 366.9L748.9 366.9L754.5 366.9L760.2 366.9L765.8 366.9L771.5 366.9L777.1 366.9L782.8 366.9L788.4 366.9L794.1 366.9L799.7 366.9L805.4 366.9L811.0 366.9L816.6 366.9L822.3 366.9L827.9 366.9L833.6 366.9L839.2 366.9L844.9 366.9L850.5 366.9L856.2 366.9L861.8 366.9L867.4 366.9L873.1 366.9L878.7 366.9L884.4 366.9L890.0 366.9L895.7 366.9L901.3 366.9L907.0 366.9L912.6 366.9L918.2 366.9L923.9 366.9L929.5 366.9L935.2 366.9L940.8 366.9L946.5 366.9L952.1 366.9L957.8 366.9L963.4 366.9L969.1 366.9L974.7 366.9L980.3 366.9L986.0 366.9L991.6 366.9L997.3 366.9L1002.9 366.9L1008.6 366.9L1014.2 366.9L1019.9 366.9L1025.5 366.9L1031.1 366.9L1036.8 366.9L1042.4 366.9L1048.1 366.9L1053.7 366.9L1059.4 366.9L1065.0 366.9L1070.7 366.9L1076.3 366.9L1082.0 366.9L1087.6 366.9L1093.2 366.9L1098.9 366.9L1104.5 366.9L1110.2 366.9L1115.8 366.9L1121.5 366.9L1127.1 366.9L1132.8 366.9" stroke="#f08656" stroke-width="1.3" fill="none" stroke-linejoin="round"/><path d="M636.0 366.9h0M641.6 366.9h0M647.3 366.9h0M652.9 366.9h0M658.6 366.9h0M664.2 366.9h0M669.9 366.9h0M675.5 366.9h0M681.2 366.9h0M686.8 366.9h0M692.5 366.9h0M698.1 366.9h0M703.7 366.9h0M709.4 366.9h0M715.0 366.9h0M720.7 366.9h0M726.3 366.9h0M732.0 366.9h0M737.6 366.9h0M743.3 366.9h0M748.9 366.9h0M754.5 366.9h0M760.2 366.9h0M765.8 366.9h0M771.5 366.9h0M777.1 366.9h0M782.8 366.9h0M788.4 366.9h0M794.1 366.9h0M799.7 366.9h0M805.4 366.9h0M811.0 366.9h0M816.6 366.9h0M822.3 366.9h0M827.9 366.9h0M833.6 366.9h0M839.2 366.9h0M844.9 366.9h0M850.5 366.9h0M856.2 366.9h0M861.8 366.9h0M867.4 366.9h0M873.1 366.9h0M878.7 366.9h0M884.4 366.9h0M890.0 366.9h0M895.7 366.9h0M901.3 366.9h0M907.0 366.9h0M912.6 366.9h0M918.2 366.9h0M923.9 366.9h0M929.5 366.9h0M935.2 366.9h0M940.8 366.9h0M946.5 366.9h0M952.1 366.9h0M957.8 366.9h0M963.4 366.9h0M969.1 366.9h0M974.7 366.9h0M980.3 366.9h0M986.0 366.9h0M991.6 366.9h0M997.3 366.9h0M1002.9 366.9h0M1008.6 366.9h0M1014.2 366.9h0M1019.9 366.9h0M1025.5 366.9h0M1031.1 366.9h0M1036.8 366.9h0M1042.4 366.9h0M1048.1 366.9h0M1053.7 366.9h0M1059.4 366.9h0M1065.0 366.9h0M1070.7 366.9h0M1076.3 366.9h0M1082.0 366.9h0M1087.6 366.9h0M1093.2 366.9h0M1098.9 366.9h0M1104.5 366.9h0M1110.2 366.9h0M1115.8 366.9h0M1121.5 366.9h0M1127.1 366.9h0M1132.8 366.9h0" stroke="#f08656" stroke-width="2.8" stroke-linecap="round" fill="none"/></svg>
<span class="t" id="c2y0" style="right:548.75px;top:268px;font-size:8.7px;color:#8e8e8e;letter-spacing:0.15px;">585.9 KB</span>
<span class="t" id="c2y1" style="right:548.72px;top:284px;font-size:8.7px;color:#8e8e8e;letter-spacing:0.179px;">488.3 KB</span>
<span class="t" id="c2y2" style="right:548.74px;top:299px;font-size:8.7px;color:#8e8e8e;letter-spacing:0.164px;">390.6 KB</span>
<span class="t" id="c2y3" style="right:548.75px;top:315px;font-size:8.7px;color:#8e8e8e;letter-spacing:0.15px;">293.0 KB</span>
<span class="t" id="c2y4" style="right:549.02px;top:331px;font-size:8.7px;color:#8e8e8e;letter-spacing:-0.121px;">195.3 KB</span>
<span class="t" id="c2y5" style="right:549.02px;top:347px;font-size:8.7px;color:#8e8e8e;letter-spacing:-0.12px;">97.7 KB</span>
<span class="t" id="c2y6" style="right:548.85px;top:363px;font-size:8.7px;color:#8e8e8e;letter-spacing:0.051px;">0.0 B</span>
<span class="t" id="c2x0" style="left:536.04px;width:200px;text-align:center;top:372px;font-size:8.8px;color:#8e8e8e;letter-spacing:0.071px;">14:20</span>
<span class="t" id="c2x1" style="left:603.78px;width:200px;text-align:center;top:372px;font-size:8.8px;color:#8e8e8e;letter-spacing:0.071px;">14:22</span>
<span class="t" id="c2x2" style="left:671.52px;width:200px;text-align:center;top:372px;font-size:8.8px;color:#8e8e8e;letter-spacing:0.071px;">14:24</span>
<span class="t" id="c2x3" style="left:739.26px;width:200px;text-align:center;top:372px;font-size:8.8px;color:#8e8e8e;letter-spacing:0.071px;">14:26</span>
<span class="t" id="c2x4" style="left:807px;width:200px;text-align:center;top:372px;font-size:8.8px;color:#8e8e8e;letter-spacing:0.071px;">14:28</span>
<span class="t" id="c2x5" style="left:874.74px;width:200px;text-align:center;top:372px;font-size:8.8px;color:#8e8e8e;letter-spacing:0.071px;">14:30</span>
<span class="t" id="c2x6" style="left:942.48px;width:200px;text-align:center;top:372px;font-size:8.8px;color:#8e8e8e;letter-spacing:0.071px;">14:32</span>
<span class="t" id="c2x7" style="left:1010.22px;width:200px;text-align:center;top:372px;font-size:8.8px;color:#8e8e8e;letter-spacing:0.071px;">14:34</span>
<svg class="abs" style="left:596px;top:386px" width="11" height="11"><circle cx="5.7" cy="5.9" r="4" fill="#3ebeb0"/></svg>
<span class="t" id="c2l0" style="left:610.4px;top:388px;font-size:8.4px;color:#343741;letter-spacing:0.064px;-webkit-text-stroke:0.1px;">Lucene Total 430.4 KB</span>
<svg class="abs" style="left:704px;top:386px" width="11" height="11"><circle cx="5.5" cy="5.9" r="4" fill="#3b73ac"/></svg>
<span class="t" id="c2l1" style="left:718.3px;top:388px;font-size:8.4px;color:#343741;letter-spacing:-0.146px;-webkit-text-stroke:0.1px;">Terms 327.0 KB</span>
<svg class="abs" style="left:784px;top:386px" width="11" height="11"><circle cx="5.7" cy="5.9" r="4" fill="#f08656"/></svg>
<span class="t" id="c2l2" style="left:798.5px;top:388px;font-size:8.4px;color:#343741;letter-spacing:-0.061px;-webkit-text-stroke:0.1px;">Points 0.0 B</span>
<span class="t" id="c3t" style="left:28px;top:426px;font-size:13.4px;color:#1a1c21;letter-spacing:-0.002px;-webkit-text-stroke:0.27px;">I/O Operations Rate (/s)</span>
<svg class="abs" style="left:176.8px;top:427.8px" width="9" height="9" viewBox="0 0 9 9"><circle cx="4.5" cy="4.5" r="3.6" fill="none" stroke="#343741" stroke-width=".7"/><path stroke="#343741" stroke-width=".9" d="M4.5 3.9v2.5M4.5 2.3v.9"/></svg>
<svg class="abs" style="left:0;top:0" width="1181" height="583" viewBox="0 0 1181 583"><path d="M59.1 453.00H577.5M59.1 477.1H577.5M59.1 501.2H577.5M59.1 525.3H577.5M59.1 549.4H577.5" stroke="#ececec" stroke-width="1.35" fill="none"/><path d="M59.1 453V549.4M128.22 453V549.4M197.34 453V549.4M266.46 453V549.4M335.58 453V549.4M404.7 453V549.4M473.82 453V549.4M542.94 453V549.4" stroke="#dedede" stroke-width="1" fill="none"/><path d="M577.5 453V549.4" stroke="#e6e6e6" stroke-width="1.1" fill="none"/></svg>
<span class="t" id="c3y0" style="right:1125.44px;top:449px;font-size:8.7px;color:#8e8e8e;letter-spacing:-0.139px;">1 /s</span>
<span class="t" id="c3y1" style="right:1124.99px;top:473px;font-size:8.7px;color:#8e8e8e;letter-spacing:0.31px;">0.5 /s</span>
<span class="t" id="c3y2" style="right:1124.81px;top:497px;font-size:8.7px;color:#8e8e8e;letter-spacing:0.495px;">0 /s</span>
<span class="t" id="c3y3" style="right:1124.88px;top:521px;font-size:8.7px;color:#8e8e8e;letter-spacing:0.424px;">-0.5 /s</span>
<span class="t" id="c3y4" style="right:1125.18px;top:545px;font-size:8.7px;color:#8e8e8e;letter-spacing:0.123px;">-1 /s</span>
<span class="t" id="c3x0" style="left:-40.86px;width:200px;text-align:center;top:554px;font-size:8.8px;color:#8e8e8e;letter-spacing:0.071px;">14:20</span>
<span class="t" id="c3x1" style="left:28.26px;width:200px;text-align:center;top:554px;font-size:8.8px;color:#8e8e8e;letter-spacing:0.071px;">14:22</span>
<span class="t" id="c3x2" style="left:97.38px;width:200px;text-align:center;top:554px;font-size:8.8px;color:#8e8e8e;letter-spacing:0.071px;">14:24</span>
<span class="t" id="c3x3" style="left:166.5px;width:200px;text-align:center;top:554px;font-size:8.8px;color:#8e8e8e;letter-spacing:0.071px;">14:26</span>
<span class="t" id="c3x4" style="left:235.62px;width:200px;text-align:center;top:554px;font-size:8.8px;color:#8e8e8e;letter-spacing:0.071px;">14:28</span>
<span class="t" id="c3x5" style="left:304.74px;width:200px;text-align:center;top:554px;font-size:8.8px;color:#8e8e8e;letter-spacing:0.071px;">14:30</span>
<span class="t" id="c3x6" style="left:373.86px;width:200px;text-align:center;top:554px;font-size:8.8px;color:#8e8e8e;letter-spacing:0.071px;">14:32</span>
<span class="t" id="c3x7" style="left:442.98px;width:200px;text-align:center;top:554px;font-size:8.8px;color:#8e8e8e;letter-spacing:0.071px;">14:34</span>
<svg class="abs" style="left:30px;top:568px" width="11" height="11"><circle cx="5.9" cy="5.00" r="4" fill="#3ebeb0"/></svg>
<span class="t" id="c3l0" style="left:44.3px;top:569px;font-size:8.4px;color:#343741;letter-spacing:0.04px;-webkit-text-stroke:0.1px;">Total I/ON/A</span>
<svg class="abs" style="left:98px;top:568px" width="11" height="11"><circle cx="5.00" cy="5.00" r="4" fill="#3b73ac"/></svg>
<span class="t" id="c3l1" style="left:111.7px;top:569px;font-size:8.4px;color:#343741;letter-spacing:-0.025px;-webkit-text-stroke:0.1px;">Total Read I/ON/A</span>
<svg class="abs" style="left:187px;top:568px" width="11" height="11"><circle cx="5.00" cy="5.00" r="4" fill="#f08656"/></svg>
<span class="t" id="c3l2" style="left:200.9px;top:569px;font-size:8.4px;color:#343741;letter-spacing:0.032px;-webkit-text-stroke:0.1px;">Total Write I/ON/A</span>
<span class="t" id="c4t" style="left:594px;top:426px;font-size:13.4px;color:#1a1c21;letter-spacing:-0.066px;-webkit-text-stroke:0.27px;">CPU Utilization (%)</span>
<svg class="abs" style="left:714.7px;top:427.8px" width="9" height="9" viewBox="0 0 9 9"><circle cx="4.5" cy="4.5" r="3.6" fill="none" stroke="#343741" stroke-width=".7"/><path stroke="#343741" stroke-width=".9" d="M4.5 3.9v2.5M4.5 2.3v.9"/></svg>
<svg class="abs" style="left:0;top:0" width="1181" height="583" viewBox="0 0 1181 583"><path d="M613.2 453.00H1143.5M613.2 469.07H1143.5M613.2 485.13H1143.5M613.2 501.2H1143.5M613.2 517.27H1143.5M613.2 533.33H1143.5M613.2 549.4H1143.5" stroke="#ececec" stroke-width="1.35" fill="none"/><path d="M613.2 453V549.4M683.9 453V549.4M754.6 453V549.4M825.3 453V549.4M896.00 453V549.4M966.7 453V549.4M1037.4 453V549.4M1108.1 453V549.4" stroke="#dedede" stroke-width="1" fill="none"/><path d="M1143.5 453V549.4" stroke="#e6e6e6" stroke-width="1.1" fill="none"/><path d="M613.8 507.5L619.7 491.2L625.6 465.5L631.5 515.7L637.4 529.8L643.3 528.5L649.2 517.3L655.0 530.9L660.9 534.0L666.8 525.1L672.7 534.6L678.6 527.1L684.5 532.4L690.4 520.6L696.3 516.1L702.2 523.7L708.1 527.9L714.0 531.2L719.9 534.0L725.7 515.8L731.6 531.7L737.5 529.0L743.4 531.7L749.3 534.0L755.2 524.2L761.1 517.7L767.0 534.6L772.9 533.3L778.8 530.4L784.7 529.6L790.6 536.1L796.4 517.7L802.3 527.5L808.2 530.1L814.1 530.6L820.0 527.4L825.9 534.6L831.8 522.9L837.7 522.9L843.6 533.3L849.5 534.3L855.4 522.9L861.3 536.2L867.1 529.0L873.0 516.8L878.9 528.5L884.8 535.1L890.7 524.8L896.6 534.6L902.5 533.8L908.4 522.9L914.3 529.0L920.2 527.9L926.1 525.3L932.0 533.8L937.8 531.6L943.7 524.0L949.6 524.2L955.5 534.0L961.4 530.6L967.3 467.0L973.2 516.5L979.1 530.4L985.0 519.2L990.9 534.6L996.8 531.7L1002.7 524.2L1008.5 533.3L1014.4 535.7L1020.3 514.5L1026.2 528.2L1032.1 531.7L1038.0 528.2L1043.9 531.2L1049.8 530.6L1055.7 522.1L1061.6 530.6L1067.5 531.2L1073.4 530.1L1079.2 531.7L1085.1 534.0L1091.0 519.8L1096.9 522.9L1102.8 516.5L1108.7 458.3L1114.6 501.7L1120.5 526.7L1126.4 485.4L1132.3 522.6" stroke="#3ebeb0" stroke-width="1.3" fill="none" stroke-linejoin="round"/><path d="M613.8 507.5h0M619.7 491.2h0M625.6 465.5h0M631.5 515.7h0M637.4 529.8h0M643.3 528.5h0M649.2 517.3h0M655.0 530.9h0M660.9 534.0h0M666.8 525.1h0M672.7 534.6h0M678.6 527.1h0M684.5 532.4h0M690.4 520.6h0M696.3 516.1h0M702.2 523.7h0M708.1 527.9h0M714.0 531.2h0M719.9 534.0h0M725.7 515.8h0M731.6 531.7h0M737.5 529.0h0M743.4 531.7h0M749.3 534.0h0M755.2 524.2h0M761.1 517.7h0M767.0 534.6h0M772.9 533.3h0M778.8 530.4h0M784.7 529.6h0M790.6 536.1h0M796.4 517.7h0M802.3 527.5h0M808.2 530.1h0M814.1 530.6h0M820.0 527.4h0M825.9 534.6h0M831.8 522.9h0M837.7 522.9h0M843.6 533.3h0M849.5 534.3h0M855.4 522.9h0M861.3 536.2h0M867.1 529.0h0M873.0 516.8h0M878.9 528.5h0M884.8 535.1h0M890.7 524.8h0M896.6 534.6h0M902.5 533.8h0M908.4 522.9h0M914.3 529.0h0M920.2 527.9h0M926.1 525.3h0M932.0 533.8h0M937.8 531.6h0M943.7 524.0h0M949.6 524.2h0M955.5 534.0h0M961.4 530.6h0M967.3 467.0h0M973.2 516.5h0M979.1 530.4h0M985.0 519.2h0M990.9 534.6h0M996.8 531.7h0M1002.7 524.2h0M1008.5 533.3h0M1014.4 535.7h0M1020.3 514.5h0M1026.2 528.2h0M1032.1 531.7h0M1038.0 528.2h0M1043.9 531.2h0M1049.8 530.6h0M1055.7 522.1h0M1061.6 530.6h0M1067.5 531.2h0M1073.4 530.1h0M1079.2 531.7h0M1085.1 534.0h0M1091.0 519.8h0M1096.9 522.9h0M1102.8 516.5h0M1108.7 458.3h0M1114.6 501.7h0M1120.5 526.7h0M1126.4 485.4h0M1132.3 522.6h0" stroke="#3ebeb0" stroke-width="2.8" stroke-linecap="round" fill="none"/></svg>
<span class="t" id="c4y0" style="right:572.19px;top:449px;font-size:8.7px;color:#8e8e8e;letter-spacing:-0.392px;">6 %</span>
<span class="t" id="c4y1" style="right:572.19px;top:465px;font-size:8.7px;color:#8e8e8e;letter-spacing:-0.392px;">5 %</span>
<span class="t" id="c4y2" style="right:572.19px;top:481px;font-size:8.7px;color:#8e8e8e;letter-spacing:-0.392px;">4 %</span>
<span class="t" id="c4y3" style="right:572.19px;top:497px;font-size:8.7px;color:#8e8e8e;letter-spacing:-0.392px;">3 %</span>
<span class="t" id="c4y4" style="right:572.19px;top:513px;font-size:8.7px;color:#8e8e8e;letter-spacing:-0.392px;">2 %</span>
<span class="t" id="c4y5" style="right:572.2px;top:529px;font-size:8.7px;color:#8e8e8e;letter-spacing:-0.4px;">1 %</span>
<span class="t" id="c4y6" style="right:572.19px;top:545px;font-size:8.7px;color:#8e8e8e;letter-spacing:-0.392px;">0 %</span>
<span class="t" id="c4x0" style="left:513.24px;width:200px;text-align:center;top:554px;font-size:8.8px;color:#8e8e8e;letter-spacing:0.071px;">14:20</span>
<span class="t" id="c4x1" style="left:583.94px;width:200px;text-align:center;top:554px;font-size:8.8px;color:#8e8e8e;letter-spacing:0.071px;">14:22</span>
<span class="t" id="c4x2" style="left:654.64px;width:200px;text-align:center;top:554px;font-size:8.8px;color:#8e8e8e;letter-spacing:0.071px;">14:24</span>
<span class="t" id="c4x3" style="left:725.34px;width:200px;text-align:center;top:554px;font-size:8.8px;color:#8e8e8e;letter-spacing:0.071px;">14:26</span>
<span class="t" id="c4x4" style="left:796.04px;width:200px;text-align:center;top:554px;font-size:8.8px;color:#8e8e8e;letter-spacing:0.071px;">14:28</span>
<span class="t" id="c4x5" style="left:866.74px;width:200px;text-align:center;top:554px;font-size:8.8px;color:#8e8e8e;letter-spacing:0.071px;">14:30</span>
<span class="t" id="c4x6" style="left:937.44px;width:200px;text-align:center;top:554px;font-size:8.8px;color:#8e8e8e;letter-spacing:0.071px;">14:32</span>
<span class="t" id="c4x7" style="left:1008.14px;width:200px;text-align:center;top:554px;font-size:8.8px;color:#8e8e8e;letter-spacing:0.071px;">14:34</span>
<svg class="abs" style="left:597px;top:568px" width="11" height="11"><circle cx="5.00" cy="5.00" r="4" fill="#3ebeb0"/></svg>
<span class="t" id="c4l0" style="left:611px;top:569px;font-size:8.4px;color:#343741;letter-spacing:-0.134px;-webkit-text-stroke:0.1px;">CPU Utilization 1.67 %</span>
<div class="abs" style="left:0;top:0;width:1181px;height:1px;background:#0b0b0d"></div>
<div class="abs" style="left:0;top:1px;width:1px;height:32px;background:#3c3e45"></div>
<div class="abs" style="left:0;top:33px;width:1181px;height:1px;background:#1d1e25"></div>
<svg class="abs" style="left:0;top:574px" width="6" height="9" viewBox="0 0 6 9"><path fill="#2c2d22" d="M0 0A5.5 9 0 0 0 5.5 9H0z"/></svg>
<svg class="abs" style="left:1176px;top:578px" width="5" height="5" viewBox="0 0 5 5"><path fill="#121316" d="M5 .8A4.2 4.2 0 0 1 .8 5H5z"/></svg>
</div>
</body></html>
